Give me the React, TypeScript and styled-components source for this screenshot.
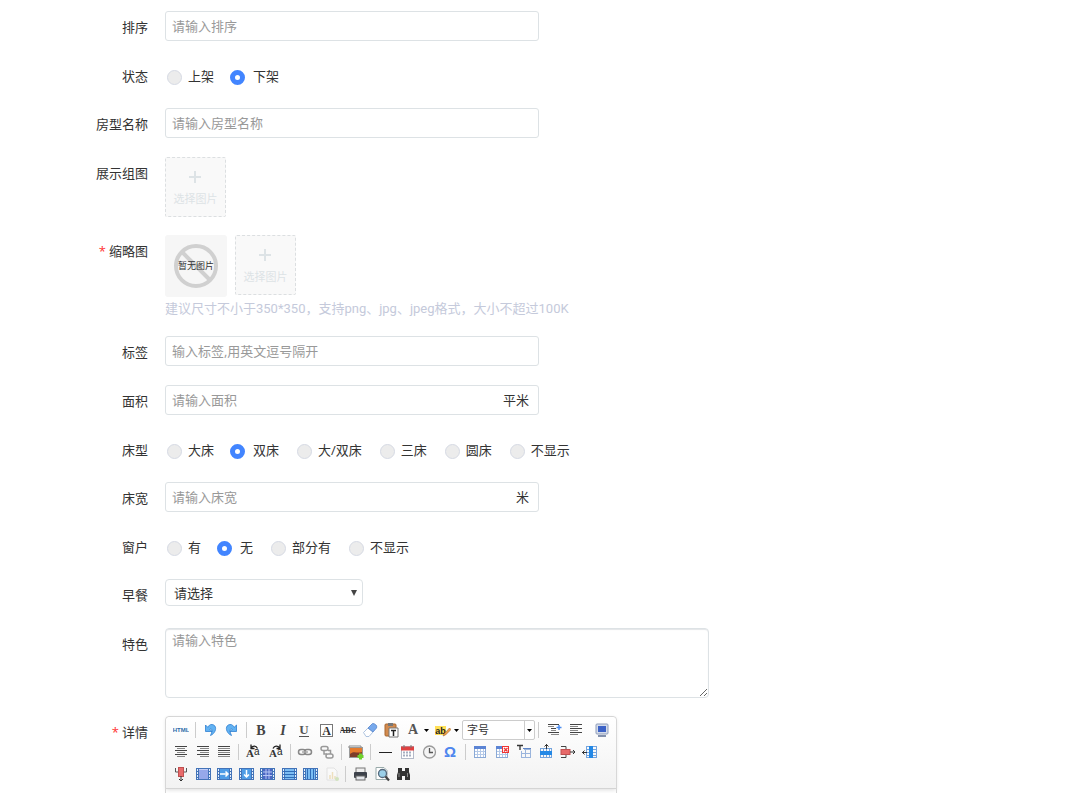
import React from "react";
import styled, { createGlobalStyle, css } from "styled-components";

const GlobalStyle = createGlobalStyle`
  * { box-sizing: border-box; }
  body {
    margin: 0;
    background: #fff;
    color: #333;
    font: 13px/20px "Open Sans", "Noto Sans CJK SC", sans-serif;
  }
  button, input, select, textarea { font: inherit; color: inherit; }
`;

const Page = styled.form`
  display: flex;
  flex-direction: column;
  gap: 18px;
  height: 100vh;
  overflow: hidden;
  padding-top: 11px;
`;

const Row = styled.div<{ $h?: number }>`
  display: flex;
  flex: none;
  gap: 17px;
  height: ${(p) => (p.$h ? `${p.$h}px` : "auto")};
`;

const labelStyle = css`
  flex: none;
  width: 148px;
  padding-top: 6px;
  text-align: right;
`;
const Label = styled.label`${labelStyle}`;
const GroupLabel = styled.div`${labelStyle}`;
const Star = styled.span`
  color: #f33;
  margin-right: 3px;
`;

const Control = styled.div`
  flex: 1;
  min-width: 0;
`;

const InputBox = styled.div`
  display: flex;
  align-items: center;
  width: 100%;
  max-width: 374px;
  height: 30px;
  padding: 0 9px 0 6px;
  border: 1px solid #dde2e5;
  border-radius: 3px;
`;
const TextInput = styled.input`
  flex: 1;
  min-width: 0;
  padding: 0;
  border: 0;
  outline: 0;
  background: none;
  &::placeholder { color: #999; opacity: 1; }
`;

const Options = styled.div`
  display: flex;
  flex-wrap: wrap;
  align-items: flex-start;
  gap: 16px;
  padding-top: 6px;
`;
const Option = styled.label`
  display: flex;
  align-items: center;
`;
const Radio = styled.input`
  appearance: none;
  width: 15px;
  height: 15px;
  margin: 2px 6px 0 2px;
  border: 1px solid #d6dae4;
  border-radius: 50%;
  background: #ececec;
  &:checked {
    margin: 2px 8px 0 0;
    border: 5px solid #4285ff;
    background: #fff;
  }
`;

const Tiles = styled.div`
  display: flex;
  gap: 8px;
`;
const PickButton = styled.button`
  display: flex;
  flex-direction: column;
  align-items: center;
  gap: 8px;
  width: 61px;
  height: 60px;
  padding: 13px 0 0;
  border: 1px dashed #dcdfe1;
  border-radius: 2px;
  background: #f9f9f9;
  color: #dde3e6;
  font-size: 11px;
  line-height: 16px;
  white-space: nowrap;
`;
const EmptyImage = styled.div`
  width: 62px;
  height: 62px;
  border-radius: 3px;
  background: #f6f6f6;
`;
const Hint = styled.p`
  margin: 2px 0 0;
  color: #c5cadb;
  font-family: Roboto, "Noto Sans CJK SC", sans-serif;
`;

const Select = styled.select`
  appearance: none;
  width: 100%;
  height: 27px;
  padding: 0 8px;
  border: 1px solid #dde2e5;
  border-radius: 4px;
  background: #fff;
`;
const SelectBox = styled.div`
  display: grid;
  align-items: center;
  max-width: 198px;
  > * { grid-area: 1 / 1; }
  > svg { justify-self: end; margin-right: 6px; pointer-events: none; }
`;
const TextArea = styled.textarea`
  display: block;
  width: 100%;
  max-width: 544px;
  height: 70px;
  padding: 1px 6px;
  border: 1px solid #dde2e5;
  border-radius: 4px;
  outline: 0;
  box-shadow: inset 0 1px 1px #e4e6e8;
  &::placeholder { color: #999; opacity: 1; }
`;

const Editor = styled.div`
  max-width: 452px;
  border: 1px solid #d4d4d4;
  border-radius: 4px;
  background: #fff;
`;
const Toolbar = styled.div`
  padding: 2px 0 3px 4px;
  border-bottom: 1px solid #d4d4d4;
  border-radius: 4px 4px 0 0;
  background: linear-gradient(#fff, #f2f2f2);
  box-shadow: 0 1px 4px #ddd;
`;
const ToolRow = styled.div`
  display: flex;
  align-items: center;
  height: 22px;
`;
const Tool = styled.button<{ $w?: number }>`
  display: flex;
  align-items: center;
  justify-content: center;
  flex: none;
  gap: 3px;
  width: ${(p) => p.$w ?? 22}px;
  height: 22px;
  padding: 0;
  border: 0;
  background: none;
`;
const Separator = styled.span`
  flex: none;
  width: 1px;
  height: 16px;
  margin: 0 3px;
  background: #ccc;
`;
const SizeBox = styled.div`
  display: grid;
  align-items: center;
  flex: none;
  width: 73px;
  height: 20px;
  border: 1px solid #ccc;
  border-radius: 2px;
  background: #fff;
  > * { grid-area: 1 / 1; }
  > span {
    display: flex;
    align-items: center;
    justify-content: center;
    justify-self: end;
    width: 10px;
    height: 18px;
    border-left: 1px solid #ccc;
    pointer-events: none;
  }
`;
const SizeSelect = styled.select`
  appearance: none;
  width: 100%;
  padding: 0 4px;
  border: 0;
  background: none;
  font-size: 11px;
  line-height: 18px;
`;
const EditArea = styled.div`
  height: 300px;
`;

const serif = "Liberation Serif, serif";

const Caret = () => (
  <svg width="5" height="3" viewBox="0 0 5 3"><path d="M0 0h5L2.5 3z" fill="#000" /></svg>
);

const lines = (rows: [number, number][]) => (
  <g shapeRendering="crispEdges">
    {rows.map(([x, w], i) => <rect key={i} x={x} y={2 + i * 2} width={w} height="1" fill={i % 2 ? "#888" : "#444"} />)}
  </g>
);

const grid = (
  <g>
    <rect x="2.500" y="2.500" width="11" height="11" fill="#fff" stroke="#8aa9d6" />
    <path d="M3 7.500h10M3 10.500h10M5.500 5v8M8.500 5v8M11.500 5v8" stroke="#b4c9e8" />
    <path d="M2 3.500h12" stroke="#5b84d4" strokeWidth="3" />
  </g>
);

const tableCells = (fill: string, inner: React.ReactNode) => (
  <g>
    <rect x="1" y="2" width="15" height="12" fill="#4373b8" />
    <path d="M2.500 3v10M14.500 3v10" stroke="#e5f0fc" strokeDasharray="2 1" />
    <rect x="4" y="3" width="9" height="10" fill={fill} />
    {inner}
  </g>
);

const icons: Record<string, React.ReactNode> = {
  html: <text x="8" y="10" textAnchor="middle" fontFamily="Liberation Sans, sans-serif" fontWeight="700" fontSize="6" fill="#2d6ca8">HTML</text>,
  undo: <path d="M3.500 3v6.500H10L7.800 7.300C10 6 11 8.500 8.500 13.500 14.500 11 15.500 3 10 2.500 8 2.300 6.800 3.500 5.800 5.300z" fill="#62b2f2" stroke="#2f7fd0" strokeWidth=".8" />,
  redo: <path d="M12.500 3v6.500H6l2.200-2.200C6 6 5 8.500 7.500 13.500 1.500 11 .500 3 6 2.500 8 2.300 9.200 3.500 10.200 5.300z" fill="#62b2f2" stroke="#2f7fd0" strokeWidth=".8" />,
  bold: <text x="8" y="13" textAnchor="middle" fontFamily={serif} fontWeight="700" fontSize="14" fill="#444">B</text>,
  italic: <text x="8" y="13" textAnchor="middle" fontFamily={serif} fontWeight="700" fontStyle="italic" fontSize="14" fill="#444">I</text>,
  underline: <><text x="8" y="12" textAnchor="middle" fontFamily={serif} fontWeight="700" fontSize="13" fill="#555">U</text><path d="M3 14.500h10" stroke="#555" /></>,
  border: <><rect x="2.500" y="2.500" width="12" height="12" fill="#fff" stroke="#777" /><text x="8.500" y="13" textAnchor="middle" fontFamily={serif} fontWeight="700" fontSize="12" fill="#333">A</text></>,
  strike: <><text x="8" y="11" textAnchor="middle" fontFamily={serif} fontWeight="700" fontSize="8" fill="#333">ABC</text><path d="M1 8.500h14" stroke="#333" /></>,
  eraser: <><path d="M1.500 10.500 6 6l5 4-4 4.500H4z" fill="#fff" stroke="#9bb5d8" strokeWidth=".8" /><path d="m6 6 4.500-4.500Q12 1 14.500 3.500 15 5 14.500 6L11 10z" fill="#77a9ec" stroke="#5584ca" strokeWidth=".8" /></>,
  paste: <><rect x="2" y="2" width="11" height="12" rx="1" fill="#d28b4f" stroke="#a9662f" /><rect x="5" y="1" width="5" height="3" fill="#777" /><path d="M6 6h9v9H6z" fill="#fff" stroke="#777" /><path d="M8 8.500h5M10.500 8v6" stroke="#222" strokeWidth="1.500" /></>,
  fore: <text x="8" y="12" textAnchor="middle" fontFamily={serif} fontWeight="700" fontSize="14" fill="#555">A</text>,
  back: <><rect x="0" y="4" width="11" height="9" fill="#ffdf55" /><text x="5.500" y="12" textAnchor="middle" fontFamily="Liberation Sans, sans-serif" fontWeight="700" fontSize="9" fill="#222">ab</text><path d="m9 12 5.500-6 1.500 1.500L10.500 13 8 14z" fill="#f0a14a" stroke="#a6642a" strokeWidth=".6" /></>,
  indent: <>{lines([[2, 11], [2, 6], [5, 5], [5, 5], [2, 11], [5, 8]])}<path d="M10.500 5.500h5M13 3v5" stroke="#4a8cf0" strokeWidth="1.500" /></>,
  left: lines([[2, 12], [2, 8], [2, 12], [2, 8], [2, 12], [2, 8]]),
  center: lines([[2, 12], [4, 8], [2, 12], [4, 8], [2, 12], [4, 8]]),
  right: lines([[2, 12], [5, 9], [2, 12], [5, 9], [2, 12], [5, 9]]),
  justify: lines([[2, 12], [2, 12], [2, 12], [2, 12], [2, 12], [2, 12]]),
  screen: <><rect x="2" y="2" width="12" height="10" rx="1" fill="#d5dcea" stroke="#8e9cb9" /><rect x="4" y="4" width="8" height="6" fill="#3c62c6" /><path d="M4 14h8" stroke="#8492ad" strokeWidth="2" /></>,
  upper: <><text x="1" y="13" fontFamily={serif} fontWeight="700" fontSize="11" fill="#333">A</text><text x="9" y="11" fontFamily="Liberation Sans, sans-serif" fontSize="10" fill="#222">a</text><path d="M12.500 4.500C11 1.500 8 1.500 6 4M6 .500v4h3.500" fill="none" stroke="#222" strokeWidth="1.300" /></>,
  lower: <><text x="1" y="13" fontFamily={serif} fontWeight="700" fontSize="11" fill="#333">A</text><text x="9" y="11" fontFamily="Liberation Sans, sans-serif" fontSize="10" fill="#222">a</text><path d="M5 4.500C6.500 1.500 9.500 1.500 12 4m0-3.500v4H8.500" fill="none" stroke="#222" strokeWidth="1.300" /></>,
  link: <g fill="none" stroke="#888" strokeWidth="1.500"><rect x="1.500" y="5.500" width="7" height="5" rx="2.500" /><rect x="7.500" y="5.500" width="7" height="5" rx="2.500" /><path d="M5 8h6" stroke="#aaa" /></g>,
  unlink: <g fill="none" stroke="#999" strokeWidth="1.500"><rect x="2" y="2.500" width="7" height="4" rx="2" /><rect x="7" y="10" width="7" height="4" rx="2" /><path d="M5 6.500v3.500h3M9 6.500h2.500V10" /></g>,
  image: <><path d="M1 4V2h12v2" fill="#fff" stroke="#888" /><rect x="1.500" y="3.500" width="13" height="10" fill="#e67b2c" stroke="#999" /><path d="M2 10c4-4 6 0 12-2v5H2z" fill="#7d3d28" /><path d="M12.500 9.500v6M9.500 12.500h6" stroke="#6fd02d" strokeWidth="3" /></>,
  rule: <path d="M2 8.500h13" stroke="#222" />,
  date: <><rect x="2.500" y="2.500" width="12" height="12" fill="#fff" stroke="#b4bac8" /><path d="M2 4.500h13" stroke="#df4141" strokeWidth="4" /><path d="M5 1v3M12 1v3" stroke="#777" /><path d="M4 8.500h9M4 11.500h9" stroke="#a5aec0" strokeWidth="2" strokeDasharray="2 1" /></>,
  time: <><circle cx="8.500" cy="8" r="6" fill="#f4f4f4" stroke="#9a9a9a" strokeWidth="1.300" /><path d="M8.500 4v4.500H12" fill="none" stroke="#555" strokeWidth="1.300" /></>,
  omega: <text x="7" y="13" textAnchor="middle" fontFamily="Liberation Sans, sans-serif" fontWeight="700" fontSize="15" fill="#4e86ee">Ω</text>,
  table: grid,
  tableDelete: <>{grid}<rect x="8.500" y="2.500" width="6" height="6" fill="#fff" stroke="#e33" /><path d="m10 4 3.500 3.500m0-3.500L10 7.500" stroke="#e33" strokeWidth="1.300" /></>,
  tableTitle: <><path d="M1 1.500h6M4 1.500V6" stroke="#333" strokeWidth="1.300" /><path d="M8 5.500h7M5 9.500h10M5 13.500h10M5.500 7v7M9.500 5v9M14.500 5v9" stroke="#9ab4dc" /><path d="M7 4.500h8" stroke="#5f84c5" /></>,
  rowInsert: <><path d="M2.500 4v10M5.500 4v10M8.500 4v10M11.500 4v10M13.500 4v10M2 4.500h12M2 13.500h12" stroke="#74a4de" /><rect x="2" y="7" width="12" height="4" fill="#2388e6" /><path d="M8.500 0v5M6.500 2.500l2-2 2 2" fill="none" stroke="#333" /></>,
  rowDelete: <><path d="M1 2.500h5v3M1 13.500h5v-3" fill="none" stroke="#444" /><rect x="1" y="5.500" width="9" height="5" fill="#e86a6a" stroke="#c05050" /><path d="M10 8h5m-2-2 2 2-2 2" fill="none" stroke="#333" /></>,
  colInsert: <><path d="M4 2.500h11M4 5.500h11M4 8.500h11M4 11.500h11M4 13.500h11M4.500 2v12M14.500 2v12" stroke="#74a4de" /><rect x="7" y="2" width="4" height="12" fill="#2388e6" /><path d="M0 8.500h5M2.500 6.500l-2 2 2 2" fill="none" stroke="#333" /></>,
  colDelete: <><path d="M2.500 2v4h3M13.500 2v4h-3" fill="none" stroke="#555" /><rect x="5.500" y="1.500" width="5" height="9" fill="#e86a6a" stroke="#c05050" /><path d="M8 10v5m-2-2 2 2 2-2" fill="none" stroke="#333" /></>,
  merge: tableCells("#96a8ea", <path d="M4 3.500h9" stroke="#c3cff8" />),
  mergeRight: tableCells("#4f9ce6", <path d="M4 8h8M9.500 5.500 12 8l-2.500 2.500" fill="none" stroke="#fff" strokeWidth="1.500" />),
  mergeDown: tableCells("#4f9ce6", <path d="M8.500 4v7M6 8.500 8.500 11 11 8.500" fill="none" stroke="#fff" strokeWidth="1.500" />),
  cells: tableCells("#4b66c4", <path d="M4 6h9M4 9.500h9M7 3v10M10 3v10" stroke="#b5c6f4" />),
  rows: tableCells("#7bbcf2", <path d="M3 5.500h12M3 8.500h12M3 11.500h12" stroke="#2f6cb8" />),
  cols: tableCells("#7bbcf2", <path d="M5.500 3v10M8.500 3v10M11.500 3v10" stroke="#2f6cb8" />),
  chart: <g opacity=".45"><path d="M3 2h7l3 3v9H3z" fill="#fff" stroke="#ccc" /><path d="M6 13V9M8.500 13V6M11 13v-3" stroke="#e7c77d" strokeWidth="1.500" /><circle cx="13" cy="13" r="2" fill="#a8cf80" /></g>,
  print: <><rect x="4" y="2" width="9" height="5" fill="#eee" stroke="#777" /><rect x="2" y="6" width="13" height="6" rx="1" fill="#3d424b" /><rect x="4" y="10" width="9" height="4" fill="#e5e8ed" stroke="#666" /></>,
  preview: <><path d="M2 1.500h8l3 3v9H2z" fill="#fff" stroke="#9aa" /><circle cx="8.500" cy="7.500" r="4" fill="#9bd0e8" stroke="#56697c" strokeWidth="1.300" /><path d="m11.500 10.500 3.500 4" stroke="#444" strokeWidth="2.200" /></>,
  find: <><path d="M3 2h4v3h3V2h4v4l1 3v5h-5v-4H7v4H2V9l1-3z" fill="#333" /><path d="M4 7v4M12.500 7v4" stroke="#888" /></>,
};

const names: Record<string, string> = {
  html: "源代码", undo: "撤销", redo: "重做", bold: "加粗", italic: "斜体", underline: "下划线",
};

type ToolItem = string | [string, number];
const toolbarRows: ToolItem[][] = [
  ["html", "|", "undo", "redo", "|", "bold", ["italic", 21], "underline", "border", "strike", ["eraser", 21], "paste", "fore", "back", "size", "|", ["indent", 23], "left", ["screen", 30]],
  ["center", ["right", 21], "justify", "|", "upper", ["lower", 23], "|", "link", "unlink", "|", "image", "|", "rule", "date", "time", "omega", "|", "table", "tableDelete", "tableTitle", "rowInsert", "rowDelete", "colInsert"],
  ["colDelete", ["merge", 21], "mergeRight", ["mergeDown", 21], "cells", ["rows", 21], "cols", ["chart", 21], "|", "print", ["preview", 21], "find"],
];

const Icon = ({ name }: { name: string }) => (
  <svg width="16" height="16" viewBox="0 0 16 16" aria-hidden="true">{icons[name]}</svg>
);

function ToolItemView({ item }: { item: ToolItem }) {
  const [name, width] = typeof item === "string" ? [item, undefined] : item;
  if (name === "|") return <Separator />;
  if (name === "size")
    return (
      <SizeBox>
        <SizeSelect aria-label="字号"><option>字号</option></SizeSelect>
        <span><Caret /></span>
      </SizeBox>
    );
  const split = name === "fore" || name === "back";
  return (
    <Tool type="button" aria-label={names[name] ?? name} $w={split ? 30 : width}>
      <Icon name={name} />
      {split && <Caret />}
    </Tool>
  );
}

function Field({ id, label, placeholder, unit }: { id: string; label: string; placeholder: string; unit?: string }) {
  return (
    <Row $h={31}>
      <Label htmlFor={id}>{label}</Label>
      <Control>
        <InputBox>
          <TextInput id={id} placeholder={placeholder} />
          {unit && <span>{unit}</span>}
        </InputBox>
      </Control>
    </Row>
  );
}

function RadioField({ name, label, options, value }: { name: string; label: string; options: string[]; value: string }) {
  return (
    <Row $h={30} role="radiogroup" aria-labelledby={name}>
      <GroupLabel id={name}>{label}</GroupLabel>
      <Options>
        {options.map((o) => (
          <Option key={o}>
            <Radio type="radio" name={name} defaultChecked={o === value} />
            {o}
          </Option>
        ))}
      </Options>
    </Row>
  );
}

const Picker = () => (
  <PickButton type="button">
    <svg width="13" height="12" viewBox="0 0 13 12"><path d="M6 0v12M0 6h12" stroke="#dde3e6" strokeWidth="2" /></svg>
    选择图片
  </PickButton>
);

export default function App() {
  return (
    <>
      <GlobalStyle />
      <Page>
        <Field id="sort" label="排序" placeholder="请输入排序" />
        <RadioField name="status" label="状态" options={["上架", "下架"]} value="下架" />
        <Field id="room" label="房型名称" placeholder="请输入房型名称" />
        <Row>
          <GroupLabel>展示组图</GroupLabel>
          <Tiles><Picker /></Tiles>
        </Row>
        <Row $h={83}>
          <GroupLabel><Star>*</Star>缩略图</GroupLabel>
          <Control>
            <Tiles>
              <EmptyImage>
                <svg width="62" height="62" viewBox="0 0 62 62" role="img" aria-label="暂无图片">
                  <circle cx="31" cy="31" r="20" fill="none" stroke="#d0d0d0" strokeWidth="4" />
                  <path d="m17 17 28 28" stroke="#d0d0d0" strokeWidth="4" />
                  <text x="31" y="34" textAnchor="middle" fontSize="9" fill="#333">暂无图片</text>
                </svg>
              </EmptyImage>
              <Picker />
            </Tiles>
            <Hint>建议尺寸不小于350*350，支持png、jpg、jpeg格式，大小不超过100K</Hint>
          </Control>
        </Row>
        <Field id="tags" label="标签" placeholder="输入标签,用英文逗号隔开" />
        <Field id="area" label="面积" placeholder="请输入面积" unit="平米" />
        <RadioField name="bed" label="床型" options={["大床", "双床", "大/双床", "三床", "圆床", "不显示"]} value="双床" />
        <Field id="width" label="床宽" placeholder="请输入床宽" unit="米" />
        <RadioField name="window" label="窗户" options={["有", "无", "部分有", "不显示"]} value="无" />
        <Row $h={31}>
          <Label htmlFor="breakfast">早餐</Label>
          <Control>
            <SelectBox>
              <Select id="breakfast"><option>请选择</option></Select>
              <svg width="6" height="6" viewBox="0 0 6 6"><path d="M0 0h6L3 6z" fill="#444" /></svg>
            </SelectBox>
          </Control>
        </Row>
        <Row>
          <Label htmlFor="feature">特色</Label>
          <Control><TextArea id="feature" placeholder="请输入特色" /></Control>
        </Row>
        <Row>
          <GroupLabel><Star>*</Star>详情</GroupLabel>
          <Control>
            <Editor>
              <Toolbar role="toolbar">
                {toolbarRows.map((row, i) => (
                  <ToolRow key={i}>
                    {row.map((item, j) => <ToolItemView key={j} item={item} />)}
                  </ToolRow>
                ))}
              </Toolbar>
              <EditArea contentEditable suppressContentEditableWarning role="textbox" aria-label="详情" />
            </Editor>
          </Control>
        </Row>
      </Page>
    </>
  );
}
